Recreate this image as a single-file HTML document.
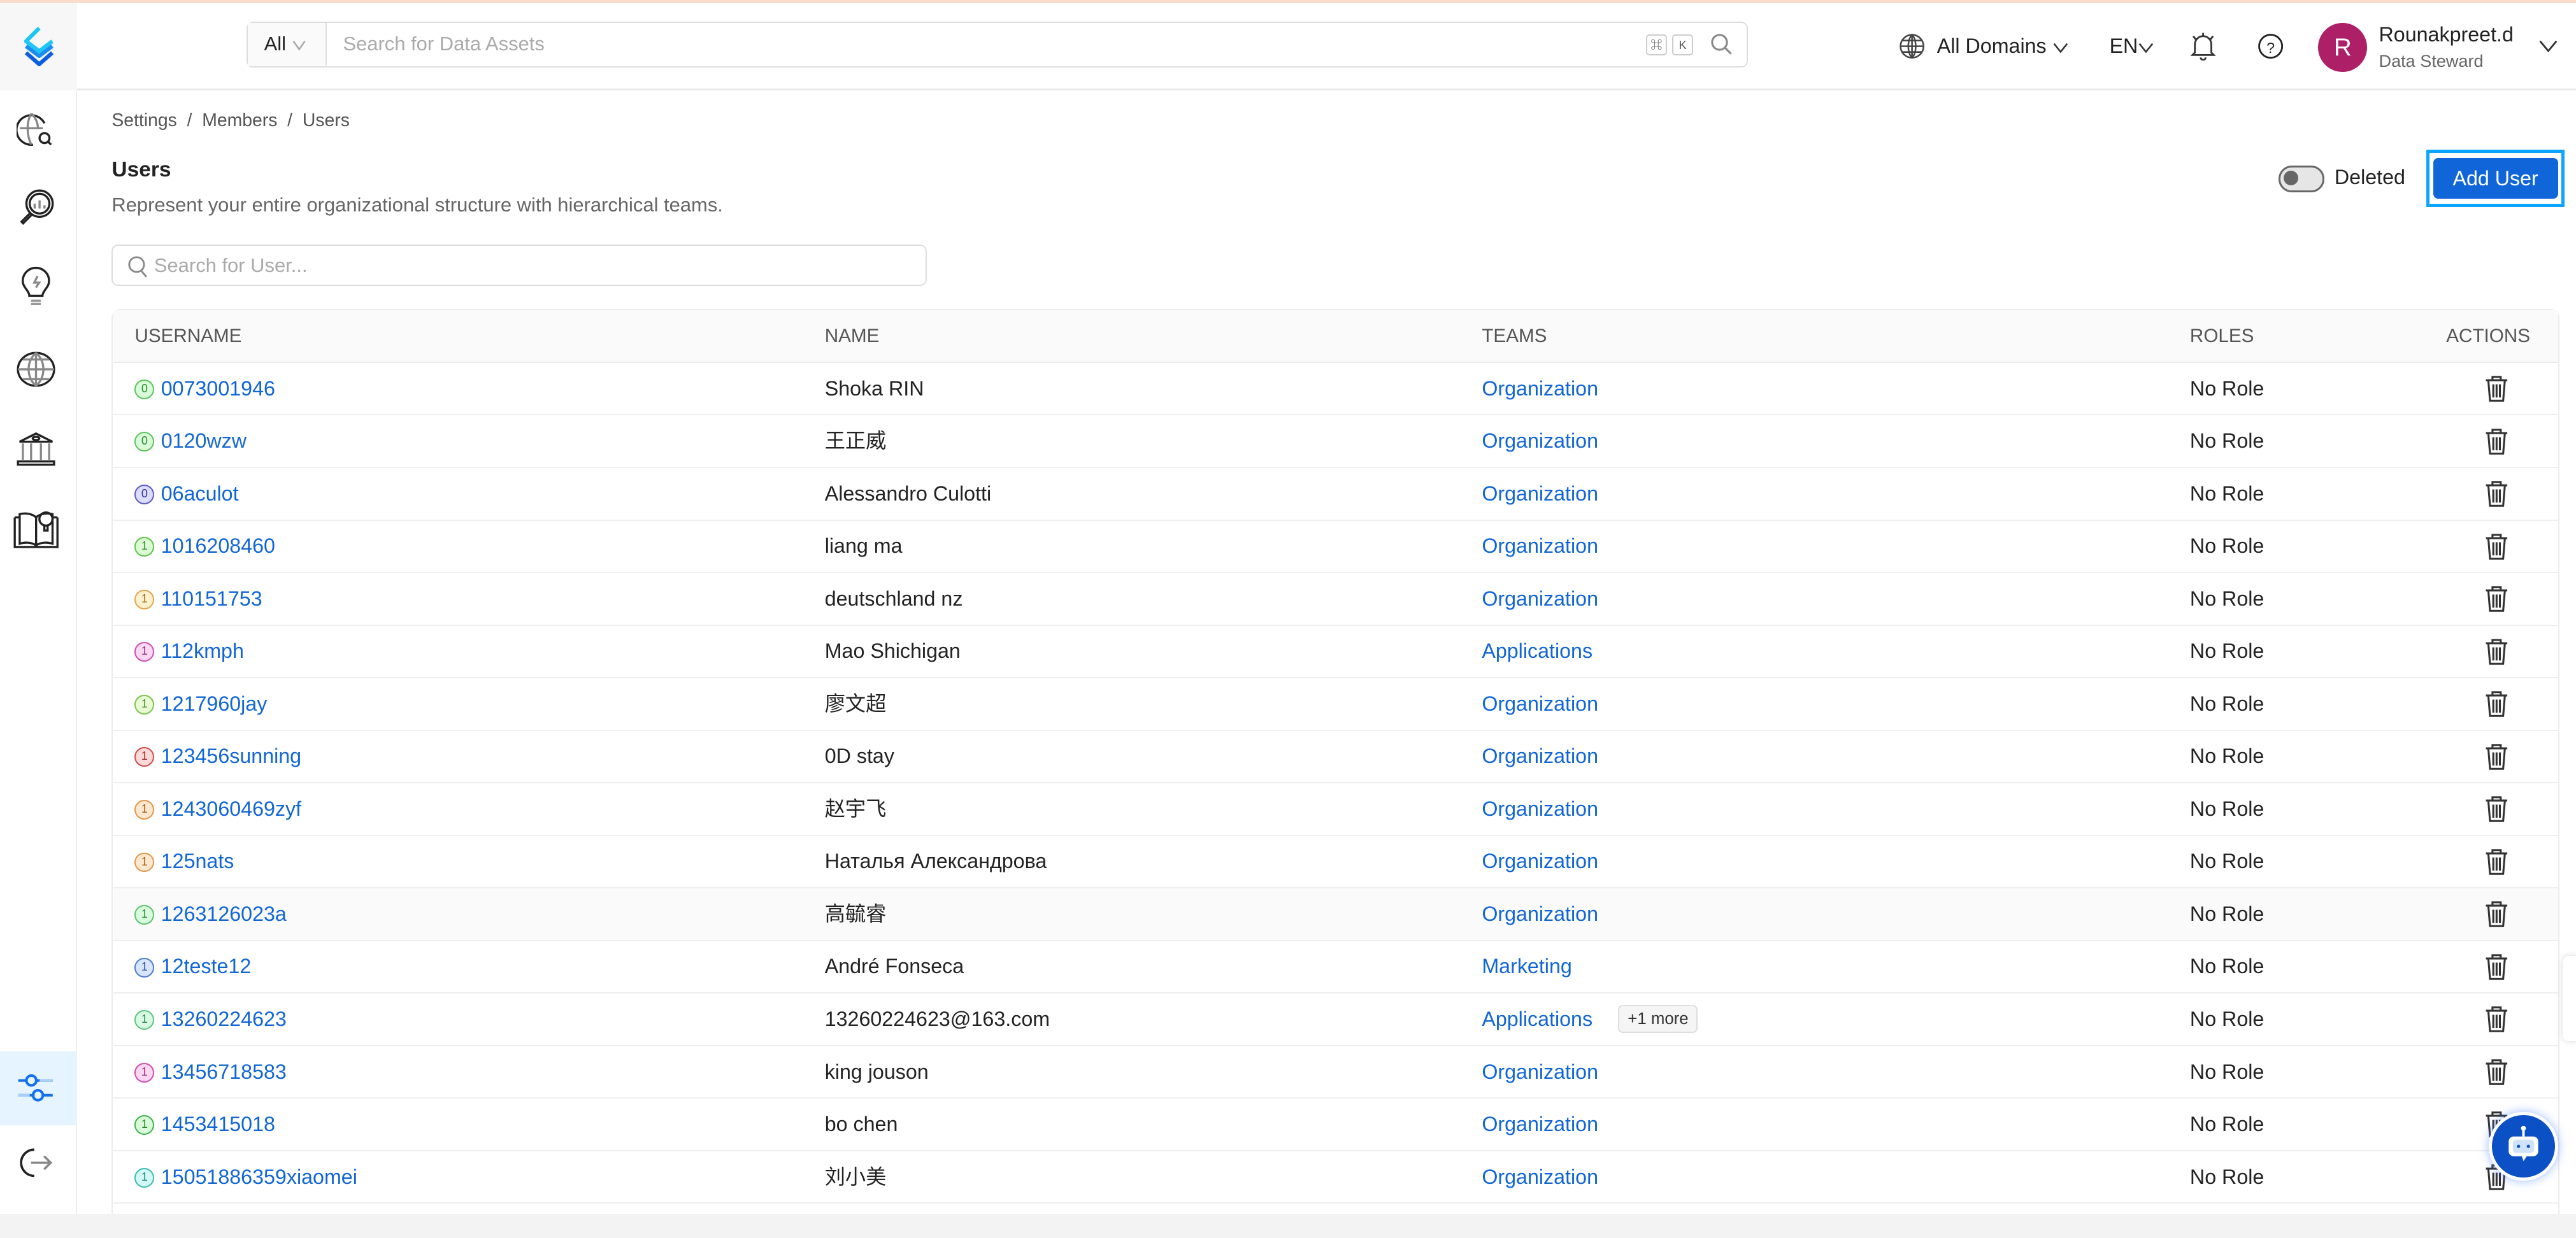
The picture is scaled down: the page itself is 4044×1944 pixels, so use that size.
<!DOCTYPE html>
<html><head><meta charset="utf-8"><style>
*{box-sizing:border-box;margin:0;padding:0}
html,body{width:4044px;height:1944px;overflow:hidden;background:#fff}
#w{zoom:2.5791;width:1568px;height:754px;position:relative;font-family:"Liberation Sans","Noto Sans CJK SC",sans-serif;color:#222;overflow:hidden}
.a{position:absolute}
.topline{left:0;top:0;width:1568px;height:2px;background:#f9dccb}
.side{left:0;top:2px;width:47px;height:737px;border-right:1px solid #ececec;background:#fff}
.logo{left:0;top:2px;width:47px;height:53px;background:#f7f7f7}
.hdr{left:47px;top:54px;width:1521px;height:1px;background:#e8e8e8}
.srch{left:150px;top:13px;width:914px;height:28px;border:1px solid #ddd;border-radius:4px;font-size:12px}
.srch .all{position:absolute;left:0;top:0;width:48px;height:26px;background:#fafafa;border-right:1px solid #ddd;padding:6px 0 0 10px;color:#222}
.srch .ph{position:absolute;left:58px;top:6px;color:#aaa}
.kbd{position:absolute;top:7px;width:13px;height:13px;border:1px solid #ccc;border-radius:2px;font-size:7px;text-align:center;line-height:12px;color:#555}
.bc{left:68px;top:67px;font-size:11px;color:#555}
.title{left:68px;top:96px;font-size:13px;font-weight:bold}
.desc{left:68px;top:118px;font-size:12px;color:#666}
.us{left:68px;top:149px;width:496px;height:25px;border:1px solid #ddd;border-radius:4px;font-size:12px;color:#aaa;padding:5px 0 0 25px}
.tbl{left:68px;top:188px;width:1490px;height:560px;border:1px solid #ececec;border-radius:6px 6px 0 0}
.th{left:69px;top:189px;width:1488px;height:32px;background:#fafafa;border-bottom:1px solid #ececec;font-size:11.5px;color:#555}
.th span{position:absolute;top:9px}
.row span{position:absolute;top:8px;line-height:15px}
.row{position:absolute;left:69px;width:1488px;height:32px;border-bottom:1px solid #efefef;font-size:12.5px}
.row .u{left:29px;color:#1166d6}
.row .n{left:433px}
.row .t{left:833px;color:#1166d6}
.row .r{left:1264px}
.bd{position:absolute;left:13px;top:10px;width:12px;height:12px;border-radius:50%;border:1px solid;font-size:7px;text-align:center;line-height:10px}
.tr{position:absolute;left:1443px;top:7px}
.more{position:absolute;left:916px;top:7px;font-size:10px;border:1px solid #ddd;background:#f5f5f5;border-radius:3px;padding:2px 5px;color:#333}
.bottom{left:0;top:739px;width:1568px;height:15px;background:#f3f3f3}
.chev{display:inline-block;vertical-align:middle}
</style></head><body><div id="w">
<div class="a topline"></div>
<div class="a side"></div>
<div class="a logo"></div>
<svg class="a" style="left:11px;top:15px" width="26" height="26" viewBox="0 0 26 26" fill="none" stroke-width="2.4" stroke-linejoin="round"><path d="M13 2 L5 10 L13 16 L21 10" stroke="#1ec6f5"/><path d="M5 13 L13 19 L21 13" stroke="#1a8ef0"/><path d="M5 17 L13 24 L21 17" stroke="#0b5fe0"/></svg>
<svg class="a" style="left:10px;top:67px" width="24" height="24" viewBox="0 0 24 24" fill="none" stroke="#222" stroke-width="1.3"><path d="M17 8A9 9 0 1 0 10 21"/><path d="M2 11h14M9 2c-3 5-3 13 0 19M9 2c3 3 4 6 4 9" stroke="#888"/><circle cx="17" cy="17" r="3"/><path d="M19 19l2 2"/></svg>
<svg class="a" style="left:10px;top:114px" width="24" height="24" viewBox="0 0 24 24" fill="none" stroke="#222" stroke-width="1.3"><circle cx="14" cy="10" r="8"/><circle cx="14" cy="10" r="6"/><path d="M11 13v-3M14 13V8M17 13v-2" stroke="#888"/><path d="M8 16l-5 5 1 1 5-5"/></svg>
<svg class="a" style="left:11px;top:162px" width="22" height="26" viewBox="0 0 22 26" fill="none" stroke="#222" stroke-width="1.3"><path d="M7 18c0-3-4-5-4-9a8 8 0 0 1 16 0c0 4-4 6-4 9z"/><path d="M8 21h6M8 23h6" stroke="#999"/><path d="M12 6l-2 4h3l-2 3" stroke="#888"/></svg>
<svg class="a" style="left:9px;top:213px" width="26" height="24" viewBox="0 0 26 24" fill="none" stroke="#222" stroke-width="1.3"><ellipse cx="13" cy="12" rx="11" ry="10"/><path d="M2 12h22M13 2v20M5 6h16M5 18h16M13 2c-6 5-6 15 0 20M13 2c6 5 6 15 0 20" stroke="#888"/></svg>
<svg class="a" style="left:9px;top:261px" width="26" height="24" viewBox="0 0 26 24" fill="none" stroke="#222" stroke-width="1.3"><path d="M3 8L13 3l10 5z"/><ellipse cx="13" cy="6" rx="2" ry="1"/><path d="M5 9v10M10 9v10M16 9v10M21 9v10" stroke="#888"/><path d="M2 20h22v2H2z"/></svg>
<svg class="a" style="left:7px;top:309px" width="30" height="26" viewBox="0 0 30 26" fill="none" stroke="#222" stroke-width="1.3"><path d="M2 6h3M25 6h3M2 6v18h26V6"/><path d="M5 4c4-1 8 0 10 2v17c-3-2-7-2-10-1zM25 4c-4-1-8 0-10 2v17c3-2 7-2 10-1z"/><circle cx="21" cy="7" r="4"/><path d="M20 11h2v3h-2z"/></svg>
<div class="a" style="left:0;top:640px;width:47px;height:45px;background:#e6f4ff"></div>
<svg class="a" style="left:10px;top:650px" width="24" height="24" viewBox="0 0 24 24" fill="none" stroke="#1470ef" stroke-width="1.6"><path d="M1 8h5M12 8h10M1 17h10M16 17h6" /><circle cx="9" cy="8" r="3"/><circle cx="13" cy="17" r="3"/><path d="M14 8h8M1 17h7" stroke="#aad0fa"/></svg>
<svg class="a" style="left:11px;top:698px" width="22" height="20" viewBox="0 0 22 20" fill="none" stroke-width="1.4"><path d="M10 2A8 8 0 0 0 10 18" stroke="#222"/><path d="M8 10h12M16 6l4 4-4 4" stroke="#888"/></svg>
<div class="a hdr"></div>
<div class="a srch"><div class="all">All <svg class="chev" width="9" height="7" viewBox="0 0 9 7" fill="none" stroke="#aaa" stroke-width="1"><path d="M1 1l3.5 5 3.5-5"/></svg></div><div class="ph">Search for Data Assets</div>
<div class="kbd" style="left:851px">&#8984;</div><div class="kbd" style="left:867px">K</div>
<svg style="position:absolute;left:890px;top:6px" width="14" height="14" viewBox="0 0 14 14" fill="none" stroke="#888" stroke-width="1.2"><circle cx="6" cy="6" r="4.5"/><path d="M9.5 9.5L13 13"/></svg></div>
<svg class="a" style="left:1156px;top:20px" width="16" height="16" viewBox="0 0 16 16" fill="none" stroke="#444" stroke-width="1"><circle cx="8" cy="8" r="7"/><path d="M1 8h14M8 1v14M2 4.5h12M2 11.5h12M8 1c-3 3-3 11 0 14M8 1c3 3 3 11 0 14"/></svg>
<div class="a" style="left:1179px;top:21px;font-size:12.5px">All Domains <svg class="chev" width="10" height="7" viewBox="0 0 10 7" fill="none" stroke="#333" stroke-width="1"><path d="M1 1l4 5 4-5"/></svg></div>
<div class="a" style="left:1284px;top:21px;font-size:12.5px">EN<svg class="chev" width="10" height="7" viewBox="0 0 10 7" fill="none" stroke="#333" stroke-width="1"><path d="M1 1l4 5 4-5"/></svg></div>
<svg class="a" style="left:1333px;top:19px" width="16" height="18" viewBox="0 0 16 18" fill="none" stroke="#333" stroke-width="1.1"><path d="M3 13V8a5 5 0 0 1 10 0v5l1.5 1.5h-13z"/><path d="M6.5 16a1.5 1.5 0 0 0 3 0M2 3l1.5 2M14 3l-1.5 2M8 1v2"/></svg>
<svg class="a" style="left:1374px;top:20px" width="16" height="16" viewBox="0 0 16 16" fill="none" stroke="#222" stroke-width="1.1"><circle cx="8" cy="8" r="7"/><text x="8" y="12" font-size="9" text-anchor="middle" fill="#222" stroke="none" font-family="Liberation Sans">?</text></svg>
<div class="a" style="left:1411px;top:14px;width:30px;height:30px;border-radius:50%;background:#ad1f66;color:#fff;font-size:15px;text-align:center;line-height:30px">R</div>
<div class="a" style="left:1448px;top:14px;font-size:12.5px;color:#222">Rounakpreet.d</div>
<div class="a" style="left:1448px;top:31px;font-size:10.5px;color:#666">Data Steward</div>
<svg class="a" style="left:1545px;top:24px" width="12" height="8" viewBox="0 0 12 8" fill="none" stroke="#333" stroke-width="1.1"><path d="M1 1l5 6 5-6"/></svg>
<div class="a bc">Settings &nbsp;/&nbsp; Members &nbsp;/&nbsp; Users</div>
<div class="a title">Users</div>
<div class="a desc">Represent your entire organizational structure with hierarchical teams.</div>
<div class="a" style="left:1387px;top:101px;width:28px;height:16px;border-radius:8px;background:#e6e6e6;border:1.5px solid #666"></div>
<div class="a" style="left:1390px;top:104px;width:9px;height:9px;border-radius:50%;background:#666"></div>
<div class="a" style="left:1421px;top:101px;font-size:12.5px">Deleted</div>
<div class="a" style="left:1477px;top:91px;width:84px;height:35px;border:2px solid #0ba5ff"></div>
<div class="a" style="left:1481px;top:96px;width:76px;height:25px;background:#1066d9;border-radius:3px;color:#fff;font-size:12.5px;text-align:center;line-height:25px">Add User</div>
<div class="a us">Search for User...</div>
<svg class="a" style="left:77px;top:155px" width="13" height="14" viewBox="0 0 13 14" fill="none" stroke="#888" stroke-width="1.1"><circle cx="6" cy="6" r="4.5"/><path d="M9 10l3 3.5"/></svg>
<div class="a tbl"></div>
<div class="a th"><span style="left:13px">USERNAME</span><span style="left:433px">NAME</span><span style="left:833px">TEAMS</span><span style="left:1264px">ROLES</span><span style="left:1420px">ACTIONS</span></div>
<div class="row" style="top:221px"><div class="bd" style="background:#d9fbd9;border-color:#5cc45c;color:#2a8a2a">0</div><span class="u">0073001946</span><span class="n">Shoka RIN</span><span class="t">Organization</span><span class="r">No Role</span><svg class="tr" width="15" height="17" viewBox="0 0 15 17" fill="none" stroke="#333" stroke-width="1.2"><path d="M1 3.5h13M5 3.5V1.5h5v2M2.5 4l1 12h8l1-12M5.5 6v8M7.5 6v8M9.5 6v8"/></svg></div>
<div class="row" style="top:253px"><div class="bd" style="background:#d9fbd9;border-color:#5cc45c;color:#2a8a2a">0</div><span class="u">0120wzw</span><span class="n">王正威</span><span class="t">Organization</span><span class="r">No Role</span><svg class="tr" width="15" height="17" viewBox="0 0 15 17" fill="none" stroke="#333" stroke-width="1.2"><path d="M1 3.5h13M5 3.5V1.5h5v2M2.5 4l1 12h8l1-12M5.5 6v8M7.5 6v8M9.5 6v8"/></svg></div>
<div class="row" style="top:285px"><div class="bd" style="background:#dcdcfd;border-color:#5c5cc4;color:#33339a">0</div><span class="u">06aculot</span><span class="n">Alessandro Culotti</span><span class="t">Organization</span><span class="r">No Role</span><svg class="tr" width="15" height="17" viewBox="0 0 15 17" fill="none" stroke="#333" stroke-width="1.2"><path d="M1 3.5h13M5 3.5V1.5h5v2M2.5 4l1 12h8l1-12M5.5 6v8M7.5 6v8M9.5 6v8"/></svg></div>
<div class="row" style="top:317px"><div class="bd" style="background:#dcfbd4;border-color:#5cc44c;color:#2a8a2a">1</div><span class="u">1016208460</span><span class="n">liang ma</span><span class="t">Organization</span><span class="r">No Role</span><svg class="tr" width="15" height="17" viewBox="0 0 15 17" fill="none" stroke="#333" stroke-width="1.2"><path d="M1 3.5h13M5 3.5V1.5h5v2M2.5 4l1 12h8l1-12M5.5 6v8M7.5 6v8M9.5 6v8"/></svg></div>
<div class="row" style="top:349px"><div class="bd" style="background:#fdf0cf;border-color:#e3a84a;color:#9a6a10">1</div><span class="u">110151753</span><span class="n">deutschland nz</span><span class="t">Organization</span><span class="r">No Role</span><svg class="tr" width="15" height="17" viewBox="0 0 15 17" fill="none" stroke="#333" stroke-width="1.2"><path d="M1 3.5h13M5 3.5V1.5h5v2M2.5 4l1 12h8l1-12M5.5 6v8M7.5 6v8M9.5 6v8"/></svg></div>
<div class="row" style="top:381px"><div class="bd" style="background:#fcd8f2;border-color:#d24cb0;color:#9a2a7a">1</div><span class="u">112kmph</span><span class="n">Mao Shichigan</span><span class="t">Applications</span><span class="r">No Role</span><svg class="tr" width="15" height="17" viewBox="0 0 15 17" fill="none" stroke="#333" stroke-width="1.2"><path d="M1 3.5h13M5 3.5V1.5h5v2M2.5 4l1 12h8l1-12M5.5 6v8M7.5 6v8M9.5 6v8"/></svg></div>
<div class="row" style="top:413px"><div class="bd" style="background:#e8fbd4;border-color:#7cc44c;color:#4a8a2a">1</div><span class="u">1217960jay</span><span class="n">廖文超</span><span class="t">Organization</span><span class="r">No Role</span><svg class="tr" width="15" height="17" viewBox="0 0 15 17" fill="none" stroke="#333" stroke-width="1.2"><path d="M1 3.5h13M5 3.5V1.5h5v2M2.5 4l1 12h8l1-12M5.5 6v8M7.5 6v8M9.5 6v8"/></svg></div>
<div class="row" style="top:445px"><div class="bd" style="background:#fdd8d8;border-color:#d24c4c;color:#9a2a2a">1</div><span class="u">123456sunning</span><span class="n">0D stay</span><span class="t">Organization</span><span class="r">No Role</span><svg class="tr" width="15" height="17" viewBox="0 0 15 17" fill="none" stroke="#333" stroke-width="1.2"><path d="M1 3.5h13M5 3.5V1.5h5v2M2.5 4l1 12h8l1-12M5.5 6v8M7.5 6v8M9.5 6v8"/></svg></div>
<div class="row" style="top:477px"><div class="bd" style="background:#fde8cf;border-color:#e3964a;color:#9a5a10">1</div><span class="u">1243060469zyf</span><span class="n">赵宇飞</span><span class="t">Organization</span><span class="r">No Role</span><svg class="tr" width="15" height="17" viewBox="0 0 15 17" fill="none" stroke="#333" stroke-width="1.2"><path d="M1 3.5h13M5 3.5V1.5h5v2M2.5 4l1 12h8l1-12M5.5 6v8M7.5 6v8M9.5 6v8"/></svg></div>
<div class="row" style="top:509px"><div class="bd" style="background:#fde8cf;border-color:#e3964a;color:#9a5a10">1</div><span class="u">125nats</span><span class="n">Наталья Александрова</span><span class="t">Organization</span><span class="r">No Role</span><svg class="tr" width="15" height="17" viewBox="0 0 15 17" fill="none" stroke="#333" stroke-width="1.2"><path d="M1 3.5h13M5 3.5V1.5h5v2M2.5 4l1 12h8l1-12M5.5 6v8M7.5 6v8M9.5 6v8"/></svg></div>
<div class="row" style="top:541px;background:#fafafa"><div class="bd" style="background:#d9fbe0;border-color:#5cc46c;color:#2a8a3a">1</div><span class="u">1263126023a</span><span class="n">高毓睿</span><span class="t">Organization</span><span class="r">No Role</span><svg class="tr" width="15" height="17" viewBox="0 0 15 17" fill="none" stroke="#333" stroke-width="1.2"><path d="M1 3.5h13M5 3.5V1.5h5v2M2.5 4l1 12h8l1-12M5.5 6v8M7.5 6v8M9.5 6v8"/></svg></div>
<div class="row" style="top:573px"><div class="bd" style="background:#d8e6fd;border-color:#4c7cd2;color:#2a4a9a">1</div><span class="u">12teste12</span><span class="n">André Fonseca</span><span class="t">Marketing</span><span class="r">No Role</span><svg class="tr" width="15" height="17" viewBox="0 0 15 17" fill="none" stroke="#333" stroke-width="1.2"><path d="M1 3.5h13M5 3.5V1.5h5v2M2.5 4l1 12h8l1-12M5.5 6v8M7.5 6v8M9.5 6v8"/></svg></div>
<div class="row" style="top:605px"><div class="bd" style="background:#d9fbe4;border-color:#5cc47c;color:#2a8a4a">1</div><span class="u">13260224623</span><span class="n">13260224623@163.com</span><span class="t">Applications</span><div class="more">+1 more</div><span class="r">No Role</span><svg class="tr" width="15" height="17" viewBox="0 0 15 17" fill="none" stroke="#333" stroke-width="1.2"><path d="M1 3.5h13M5 3.5V1.5h5v2M2.5 4l1 12h8l1-12M5.5 6v8M7.5 6v8M9.5 6v8"/></svg></div>
<div class="row" style="top:637px"><div class="bd" style="background:#fcd8f2;border-color:#d24cb0;color:#9a2a7a">1</div><span class="u">13456718583</span><span class="n">king jouson</span><span class="t">Organization</span><span class="r">No Role</span><svg class="tr" width="15" height="17" viewBox="0 0 15 17" fill="none" stroke="#333" stroke-width="1.2"><path d="M1 3.5h13M5 3.5V1.5h5v2M2.5 4l1 12h8l1-12M5.5 6v8M7.5 6v8M9.5 6v8"/></svg></div>
<div class="row" style="top:669px"><div class="bd" style="background:#d9fbd9;border-color:#3cb44c;color:#2a8a2a">1</div><span class="u">1453415018</span><span class="n">bo chen</span><span class="t">Organization</span><span class="r">No Role</span><svg class="tr" width="15" height="17" viewBox="0 0 15 17" fill="none" stroke="#333" stroke-width="1.2"><path d="M1 3.5h13M5 3.5V1.5h5v2M2.5 4l1 12h8l1-12M5.5 6v8M7.5 6v8M9.5 6v8"/></svg></div>
<div class="row" style="top:701px"><div class="bd" style="background:#d4f8f6;border-color:#3cbcb4;color:#1a8a84">1</div><span class="u">15051886359xiaomei</span><span class="n">刘小美</span><span class="t">Organization</span><span class="r">No Role</span><svg class="tr" width="15" height="17" viewBox="0 0 15 17" fill="none" stroke="#333" stroke-width="1.2"><path d="M1 3.5h13M5 3.5V1.5h5v2M2.5 4l1 12h8l1-12M5.5 6v8M7.5 6v8M9.5 6v8"/></svg></div>
<div class="a" style="left:1560px;top:582px;width:10px;height:52px;background:#fff;border-radius:4px 0 0 4px;box-shadow:0 0 4px rgba(0,0,0,.15)"></div>
<div class="a" style="left:1515px;top:677px;width:42px;height:42px;border-radius:50%;background:#0b50c4;border:2px solid #fff;box-shadow:0 0 6px rgba(60,120,255,.5)"></div>
<svg class="a" style="left:1523px;top:684px" width="26" height="26" viewBox="0 0 26 26"><path d="M13 3v5" stroke="#fff" stroke-width="1.5"/><circle cx="13" cy="3" r="1.5" fill="#fff"/><rect x="4" y="8" width="18" height="12" rx="3" fill="#fff"/><rect x="6.5" y="10" width="13" height="8" rx="2" fill="#cfe3ff"/><circle cx="10" cy="14" r="1" fill="#0b50c4"/><circle cx="16" cy="14" r="1" fill="#0b50c4"/><path d="M12 20l1 3 2-3z" fill="#fff"/></svg>
<div class="a bottom"></div>
</div></body></html>
